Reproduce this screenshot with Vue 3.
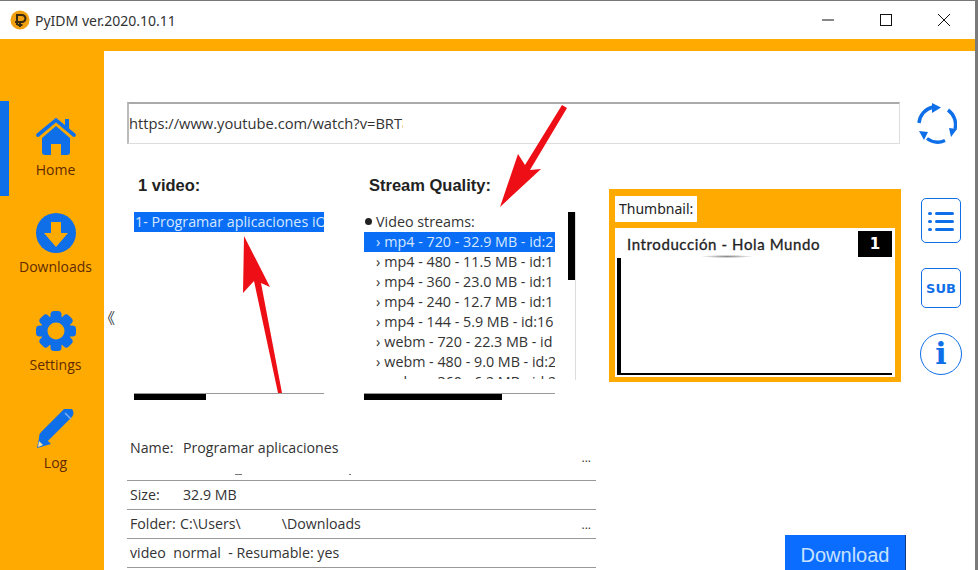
<script setup>
const streams = [
  { t: 'mp4 - 720 - 32.9 MB - id:2', sel: true },
  { t: 'mp4 - 480 - 11.5 MB - id:1' },
  { t: 'mp4 - 360 - 23.0 MB - id:1' },
  { t: 'mp4 - 240 - 12.7 MB - id:1' },
  { t: 'mp4 - 144 - 5.9 MB - id:16' },
  { t: 'webm - 720 - 22.3 MB - id' },
  { t: 'webm - 480 - 9.0 MB - id:2' },
  { t: 'webm - 360 - 6.2 MB - id:2' }
]
const teeth = [0, 45, 90, 135]
</script>

<template>
  <div class="window">
    <header class="titlebar">
      <div class="title">
        <svg class="logo" width="20" height="20" viewBox="0 0 20 20">
          <circle cx="10" cy="10" r="9.500" fill="#f0a010" />
          <path d="M7 15V5h5a3.400 3.400 0 0 1 0 7H5M10 12v5M7.500 15h5" fill="none" stroke="#3a2a10" stroke-width="2" />
        </svg>
        <span>PyIDM ver.2020.10.11</span>
      </div>
      <div class="controls">
        <svg width="14" height="14" viewBox="0 0 14 14"><path d="M1 7h12" stroke="#111" stroke-width="1" /></svg>
        <svg width="14" height="14" viewBox="0 0 14 14"><rect x="1.500" y="1.500" width="11" height="11" fill="none" stroke="#111" /></svg>
        <svg width="14" height="14" viewBox="0 0 14 14"><path d="M1 1l12 12M13 1L1 13" stroke="#111" stroke-width="1" /></svg>
      </div>
    </header>

    <div class="body">
      <aside class="sidebar">
        <span class="active-mark"></span>
        <div class="nav home">
          <svg width="40" height="39" viewBox="0 0 40 39">
            <path d="M2 18L20 3l18 15" fill="none" stroke="#0f6fe8" stroke-width="3.600" stroke-linecap="round" />
            <path d="M29 2h4v10l-4-3z" fill="#0f6fe8" />
            <path d="M6 21L20 9l14 12v14a3 3 0 0 1-3 3h-6V27H15v11H9a3 3 0 0 1-3-3z" fill="#0f6fe8" />
          </svg>
          <span>Home</span>
        </div>
        <div class="nav">
          <svg width="40" height="40" viewBox="0 0 40 40">
            <circle cx="20" cy="20" r="20" fill="#0f6fe8" />
            <path d="M15 9h10v11h7L20 34 8 20h7z" fill="#ffaa00" />
          </svg>
          <span>Downloads</span>
        </div>
        <div class="nav">
          <svg width="40" height="40" viewBox="0 0 40 40">
            <circle cx="20" cy="20" r="15" fill="#0f6fe8" />
            <rect v-for="a in teeth" :key="a" x="14.500" y="0" width="11" height="40" rx="3.500" fill="#0f6fe8" :transform="`rotate(${a} 20 20)`" />
            <circle cx="20" cy="20" r="8.500" fill="#ffaa00" />
          </svg>
          <span>Settings</span>
        </div>
        <div class="nav">
          <svg width="40" height="40" viewBox="0 0 40 40">
            <path d="M9 27L32 4" fill="none" stroke="#0f6fe8" stroke-width="11" stroke-linecap="round" />
            <path d="M4 24L15 35 1 39z" fill="#0f6fe8" />
            <path d="M3 32l4 4-5 2z" fill="#ffe3a0" />
            <path d="M29 4l6 6" stroke="#7fb0f0" stroke-width="1.500" />
          </svg>
          <span>Log</span>
        </div>
      </aside>

      <main class="main">
        <span class="collapse">《</span>

        <div class="url-row">
          <div class="url"><span class="url-text">https://www.youtube.com/watch?v=BRT8</span></div>
          <svg class="refresh" width="40" height="41" viewBox="0 0 40 41">
            <g fill="none" stroke="#0f6fe8" stroke-width="3.400">
              <path d="M2 20A18 18 0 0 1 16 4" />
              <path d="M31 7a18 18 0 0 1 7 19" />
              <path d="M28 37.500a18 18 0 0 1-18-2" />
            </g>
            <g fill="#0f6fe8">
              <path d="M15 0l9 4.500-9 5.500z" />
              <path d="M32 25l8 1-6 8z" />
              <path d="M2 28l9 1-4 8z" />
            </g>
          </svg>
        </div>

        <div class="panels">
          <section class="video-col">
            <h2>1 video:</h2>
            <div class="list video-list">
              <div class="row selected">1- Programar aplicaciones iOS</div>
            </div>
            <div class="hbar"><i class="fill-a"></i></div>
          </section>

          <section class="stream-col">
            <h2>Stream Quality:</h2>
            <div class="stream-box">
              <div class="list stream-list">
                <div class="group"><span class="dot"></span>Video streams:</div>
                <div v-for="s in streams" :key="s.t" class="row stream" :class="{ selected: s.sel }">
                  <span class="chev">›</span>{{ s.t }}
                </div>
              </div>
              <div class="vbar"><i></i></div>
            </div>
            <div class="hbar"><i class="fill-b"></i></div>
          </section>

          <section class="thumb">
            <div class="thumb-label">Thumbnail:</div>
            <div class="thumb-card">
              <div class="thumb-head">
                <span class="thumb-title">Introducción - Hola Mundo</span>
                <span class="thumb-num">1</span>
              </div>
              <span class="smudge"></span>
              <div class="thumb-img"></div>
            </div>
          </section>

          <div class="tools">
            <div class="tool">
              <svg width="26" height="24" viewBox="0 0 26 24" fill="#0f6fe8">
                <rect x="0" y="3" width="4" height="3" rx="1.500" /><rect x="7" y="3" width="19" height="3" rx="1.500" />
                <rect x="0" y="11" width="4" height="3" rx="1.500" /><rect x="7" y="11" width="19" height="3" rx="1.500" />
                <rect x="0" y="19" width="4" height="3" rx="1.500" /><rect x="7" y="19" width="19" height="3" rx="1.500" />
              </svg>
            </div>
            <div class="tool sub">SUB</div>
            <div class="info">i</div>
          </div>
        </div>

        <div class="lower">
          <div class="form">
            <div class="field name">
              <span class="lbl">Name:</span><span>Programar aplicaciones</span><span class="more">...</span>
              <span class="mark mark-a"></span><span class="mark mark-b"></span>
            </div>
            <div class="field">
              <span class="lbl">Size:</span><span>32.9 MB</span>
            </div>
            <div class="field folder">
              <span class="lbl-f">Folder:</span><span>C:\Users\</span><span class="gap">\Downloads</span><span class="more">...</span>
            </div>
            <div class="field">video&nbsp; normal&nbsp; - Resumable: yes</div>
          </div>
          <button class="download">Download</button>
        </div>

        <svg class="arrows" width="871" height="519" viewBox="0 0 871 519">
          <g fill="#ee0f16">
            <path d="M140 185L139 242 150 230 174 342 178 342 157 232 166 236Z" />
            <path d="M396 156L414 103 421 114 458 54 463 57 426 119 437 118Z" />
          </g>
        </svg>
      </main>
    </div>
  </div>
</template>

<style>
html, body { margin: 0; background: #fff; }
</style>

<style scoped>
.window {
  position: relative;
  width: 978px;
  height: 570px;
  overflow: hidden;
  display: flex;
  flex-direction: column;
  font-family: "Open Sans", "Noto Sans", sans-serif;
  color: #333;
  background: #fff;
  border-top: 1px solid #777;
  border-right: 3px solid #7a7a7a;
  box-sizing: border-box;
}
.titlebar {
  height: 38px;
  flex: none;
  display: flex;
  align-items: center;
  justify-content: space-between;
  padding: 0 24px 0 10px;
}
.title { display: flex; align-items: center; gap: 5px; font-size: 14px; font-family: "Noto Sans", sans-serif; color: #333; }
.logo { flex: none; }
.controls { display: flex; gap: 44px; align-items: center; }
.body { flex: 1; display: flex; min-height: 0; background: #ffaa00; }
.sidebar {
  position: relative;
  width: 104px;
  flex: none;
  display: flex;
  flex-direction: column;
  align-items: center;
  padding: 78px 0 0 7px;
  box-sizing: border-box;
}
.active-mark { position: absolute; left: 0; top: 62px; width: 9px; height: 95px; background: #0f6fe8; }
.nav { height: 98px; width: 80px; flex: none; display: flex; flex-direction: column; align-items: center; font-size: 14px; line-height: 19px; color: #5f2a00; }
.home { height: 96px; }
.nav span { margin-top: 4px; }
.main { position: relative; flex: 1; margin-top: 12px; background: #fff; min-width: 0; }
.collapse { position: absolute; left: -4px; top: 257px; font-size: 15px; line-height: 20px; color: #333; font-family: "Noto Sans CJK SC", sans-serif; width: 15px; overflow: hidden; }
.url-row { display: flex; align-items: center; gap: 17px; margin: 51px 0 0 23px; }
.url {
  width: 773px;
  height: 42px;
  box-sizing: border-box;
  border: 1px solid #ddd;
  border-top: 2px solid #aaa;
  border-left: 2px solid #bbb;
  font-size: 14.700px;
  line-height: 38px;
  color: #333;
}
.url-text { display: block; width: 274px; overflow: hidden; white-space: nowrap; }
.refresh { flex: none; }
.panels { display: flex; margin: 31px 0 0 30px; align-items: flex-start; }
h2 { margin: 0; font: bold 16.500px/20px "Liberation Sans", sans-serif; color: #222; }
.video-col { width: 190px; margin-right: 40px; }
.video-col h2 { margin-left: 4px; }
.list { overflow: hidden; }
.video-list { width: 190px; height: 181px; margin-top: 17px; }
.row { height: 20px; line-height: 20px; font-size: 14.300px; white-space: nowrap; overflow: hidden; }
.selected { background: #0a6df5; color: #d5e8ff; }
.video-list .row { padding-left: 1px; }
.hbar { height: 7px; background: #fff; border-top: 1px solid #999; box-sizing: border-box; display: flex; }
.hbar i { display: block; height: 6px; background: #000; }
.fill-a { width: 72px; }
.fill-b { width: 138px; }
.stream-col { width: 214px; margin-right: 31px; }
.stream-col h2 { margin-left: 5px; }
.stream-box { display: flex; gap: 13px; height: 168px; margin-top: 16px; margin-bottom: 14px; }
.stream-list { width: 191px; height: 168px; }
.group { height: 21px; line-height: 20px; font-size: 14.300px; display: flex; align-items: center; padding-left: 1px; }
.dot { width: 7px; height: 7px; border-radius: 50%; background: #222; margin-right: 4px; }
.stream { padding-left: 12px; }
.chev { margin-right: 4px; }
.stream-col .hbar { width: 191px; }
.vbar { width: 7px; height: 168px; background: #fff; border-right: 1px solid #ddd; margin-top: 1px; }
.vbar i { display: block; width: 7px; height: 68px; background: #000; }
.thumb {
  width: 292px;
  height: 193px;
  box-sizing: border-box;
  background: #ffaa00;
  padding: 7px 6px 5px 6px;
  margin-top: 14px;
  flex: none;
}
.thumb-label { display: block; width: fit-content; background: #fff; font-size: 14px; line-height: 26px; padding: 0 4px; color: #222; font-family: "Noto Sans", sans-serif; }
.thumb-card { position: relative; margin-top: 6px; height: 149px; background: #fff; padding: 3px 3px 2px 2px; box-sizing: border-box; display: flex; flex-direction: column; }
.thumb-head { height: 26px; display: flex; justify-content: space-between; align-items: center; flex: none; margin-bottom: 1px; }
.thumb-title { font: 400 15px "Lato", sans-serif; -webkit-text-stroke: .3px #222; color: #222; padding-left: 10px; letter-spacing: .6px; }
.thumb-num { width: 34px; height: 26px; background: #000; color: #fff; font: bold 15px/26px "DejaVu Sans", sans-serif; text-align: center; }
.smudge { position: absolute; left: 87px; top: 27px; width: 50px; height: 3px; border-radius: 50%; background: radial-gradient(ellipse at center, #888, rgba(255,255,255,0) 75%); }
.thumb-img { flex: 1; border-left: 4px solid #000; border-bottom: 2px solid #000; }
.tools { margin: 23px 0 0 20px; width: 40px; display: flex; flex-direction: column; align-items: center; gap: 25px; flex: none; }
.tool { width: 40px; height: 45px; border: 1px solid #0f6fe8; border-radius: 5px; box-sizing: border-box; display: flex; align-items: center; justify-content: center; }
.tool.sub { height: 40px; font: bold 13px "DejaVu Sans", sans-serif; color: #0f6fe8; }
.info { width: 42px; height: 42px; border: 1.500px solid #0f6fe8; border-radius: 50%; box-sizing: border-box; text-align: center; font: bold 30px/39px "DejaVu Serif", serif; color: #0f6fe8; flex: none; }
.lower { margin: 34px 0 0 23px; display: flex; align-items: flex-start; }
.form { width: 469px; flex: none; font-size: 14.200px; color: #333; }
.field { position: relative; height: 29px; line-height: 28px; border-bottom: 1px solid #999; box-sizing: border-box; padding-left: 3px; white-space: nowrap; display: flex; }
.name { height: 47px; line-height: 20px; padding-top: 4px; }
.lbl { width: 53px; flex: none; }
.lbl-f { width: 50px; flex: none; }
.gap { margin-left: 41px; }
.more { position: absolute; right: 5px; bottom: 15px; font-size: 12px; line-height: 14px; }
.folder .more { bottom: 6px; }
.mark { position: absolute; height: 1px; background: #777; top: 40px; }
.mark-a { left: 108px; width: 7px; }
.mark-b { left: 222px; width: 2px; }
.download { margin: 101px 0 0 189px; width: 121px; height: 40px; flex: none; background: #0a6dff; color: #c7e2ff; border: 0; border-right: 1px solid #123a80; font: 20px "Liberation Sans", sans-serif; padding: 0; }
.arrows { position: absolute; left: 0; top: 0; pointer-events: none; }
</style>
